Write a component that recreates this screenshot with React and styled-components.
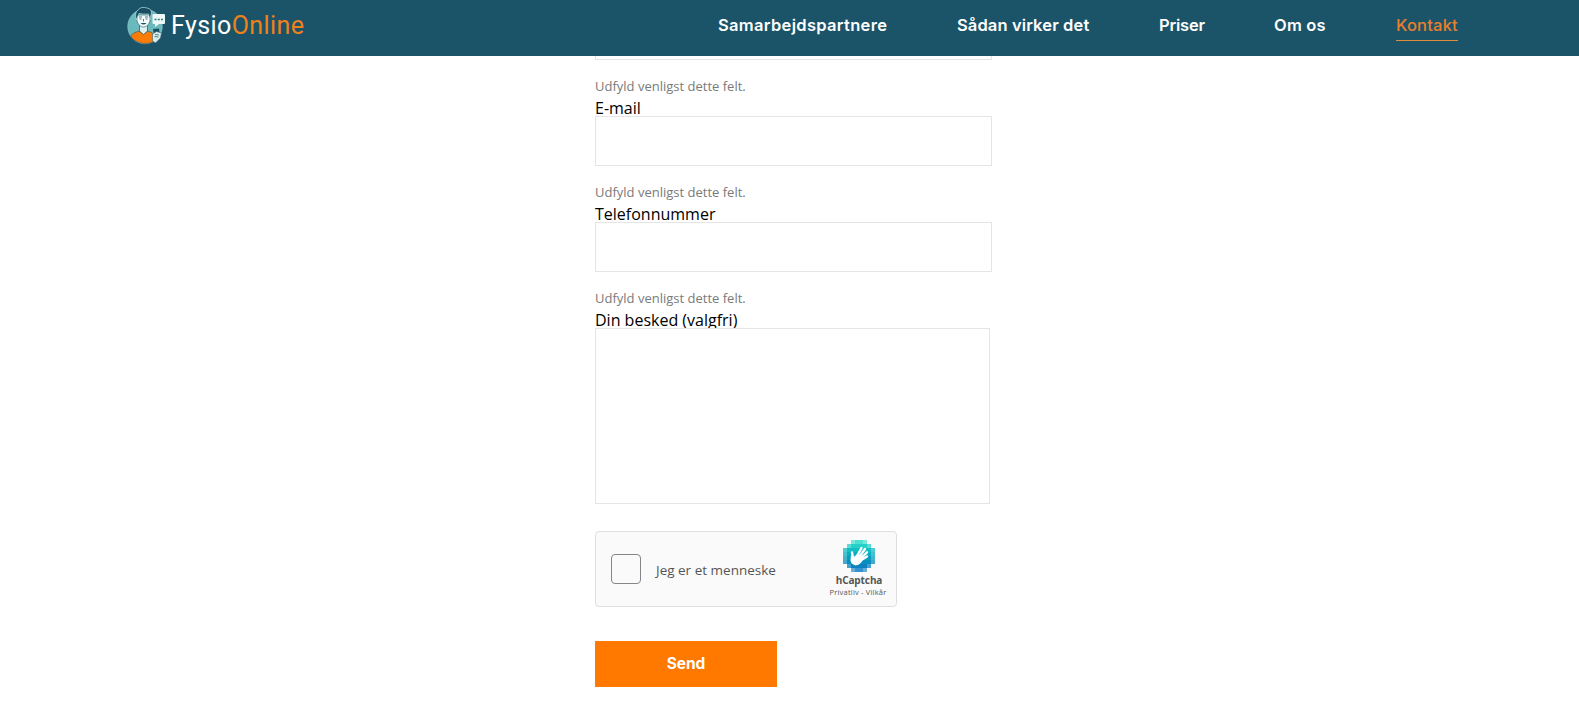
import React from "react";
import styled, { createGlobalStyle } from "styled-components";

const Global = createGlobalStyle`
  * { box-sizing: border-box; }
  html, body { margin: 0; background: #fff; overflow: hidden; }
  body { font-family: "Open Sans", "Noto Sans", sans-serif; color: #000; }
`;

const Page = styled.div`
  height: 708px;
  overflow: hidden;
  display: flex;
  flex-direction: column;
`;

const Header = styled.header`
  flex: none;
  height: 56px;
  background: #1b5468;
  display: flex;
  justify-content: space-between;
  align-items: flex-start;
  padding: 0 121px 0 127px;
`;

const Brand = styled.a`
  display: flex;
  align-items: flex-start;
  gap: 4px;
  padding-top: 6px;
`;

const Wordmark = styled.span`
  font: 400 25px/40px Roboto, sans-serif;
  letter-spacing: 0.42px;
  color: #fff;
  white-space: nowrap;
  span { color: #f0811a; }
`;

const Nav = styled.nav`
  display: flex;
  gap: 70px;
  padding-top: 9px;
`;

const NavLink = styled.a`
  width: ${(p) => p.$width}px;
  height: 32px;
  font: ${(p) => (p.$active ? 500 : 600)} 16.5px/33px Inter, sans-serif;
  letter-spacing: ${(p) => p.$track || 0}px;
  white-space: nowrap;
  color: ${(p) => (p.$active ? "#e87f2d" : "#fff")};
  border-bottom: 1px solid ${(p) => (p.$active ? "#e08c3c" : "transparent")};
`;

const Form = styled.form`
  width: 397px;
  margin-left: 595px;
  display: flex;
  flex-direction: column;
  align-items: flex-start;
`;

const ClippedField = styled.div`
  width: 397px;
  height: 4px;
  border: 1px solid #e5e5e5;
  border-top: 0;
`;

const Hint = styled.span`
  margin-top: 16px;
  height: 20px;
  font-size: 13px;
  line-height: 20px;
  color: #7a7a7a;
`;

const Label = styled.label`
  height: 20px;
  font-size: 16px;
  line-height: 24px;
`;

const Input = styled.input`
  position: relative;
  width: 397px;
  height: 50px;
  border: 1px solid #e5e5e5;
  background: #fff;
  outline: 0;
`;

const TextArea = styled.textarea`
  position: relative;
  display: block;
  width: 395px;
  height: 176px;
  border: 1px solid #e5e5e5;
  background: #fff;
  resize: none;
`;

const Captcha = styled.div`
  width: 302px;
  height: 76px;
  margin-top: 27px;
  border: 1px solid #dedede;
  border-radius: 4px;
  background: #fafafa;
  display: flex;
  align-items: center;
  padding-left: 15px;
`;

const Check = styled.span`
  width: 30px;
  height: 30px;
  border: 1px solid #858585;
  border-radius: 4px;
`;

const CaptchaText = styled.span`
  flex: 1;
  margin-left: 15px;
  padding-top: 2px;
  font: 13.5px/20px "Open Sans", sans-serif;
  letter-spacing: 0;
  color: #555;
  white-space: nowrap;
`;

const CaptchaBrand = styled.div`
  align-self: flex-start;
  width: 74px;
  padding-top: 8px;
  display: flex;
  flex-direction: column;
  align-items: center;
  color: #555;
  b { font: 700 10px/14px "Open Sans", sans-serif; letter-spacing: -0.1px; margin-top: 1px; }
  small { font: 7.5px/10px "Open Sans", sans-serif; letter-spacing: 0.2px; white-space: nowrap; margin-right: 2px; }
`;

const Send = styled.button`
  width: 182px;
  height: 46px;
  margin-top: 34px;
  border: 0;
  background: #ff7800;
  color: #fff;
  font: 700 15.5px/46px Inter, sans-serif;
  letter-spacing: -0.1px;
  padding: 0;
`;

const Avatar = () => (
  <svg width="40" height="40" viewBox="0 0 40 40">
    <circle cx="18" cy="20.500" r="17.300" fill="#69b9bd" stroke="#a9d6d8" strokeWidth=".5" />
    <path d="M12.500 16h8v9l-4 4-4-4z" fill="#dff0ef" stroke="#1b5468" strokeWidth=".7" />
    <path d="M3.500 30Q5 27 12 25L16.500 28.500L21 25Q26 26 27.500 30L28.500 34.500Q18 41 7 34Z" fill="#f97c08" stroke="#184e60" strokeWidth=".5" />
    <path d="M10 9h13v6Q21 21 16.500 21Q12 21 10 15Z" fill="#f4fbfa" stroke="#1b5468" strokeWidth=".6" />
    <path d="M9.500 14Q7 7 11 4Q14 0 20 2Q26 3 24 9L23 14L21.500 8Q16 8.500 12 7.500Z" fill="#184e60" stroke="#bfe0e0" strokeWidth=".7" />
    <path d="M12 11h3M18 11h3M12.500 13h2M18.500 13h2M16.500 13v2.500" stroke="#27596b" strokeWidth=".8" fill="none" />
    <path d="M13.500 17q3 3 6 0z" fill="#184e60" />
    <path d="M26.500 8h10.500q1 0 1 1v8q0 1-1 1h-5l-4 3v-3h-1.500q-1 0-1-1V9q0-1 1-1Z" fill="#eef8f7" />
    <path d="M27.500 13.500h2M30.800 13.500h2M34 13.500h2" stroke="#2d8088" strokeWidth="1.300" />
    <path d="M26 23l6-.500 1 9-5 2z" fill="#184e60" />
    <path d="M25.500 28l4-2.500 5 1.500-1 5-5 5-3-2z" fill="#d9ecea" stroke="#1b5468" strokeWidth=".5" />
    <path d="M28 28.500l4 .500M27.500 30.500l4 .500" stroke="#1b5468" strokeWidth=".7" />
  </svg>
);

const BANDS = [
  ["#4de1d2", "..1221.."],
  ["#25d0c8", ".122221."],
  ["#10bec3", "12222221"],
  ["#08adc0", "12222221"],
  ["#089dbc", "12222221"],
  ["#078fbd", "12222221"],
  ["#0b82bd", ".122221."],
  ["#3592ce", "..1221.."],
];

const CaptchaLogo = () => (
  <svg width="32" height="32" viewBox="0 0 32 32">
    <g shapeRendering="crispEdges">
      {BANDS.map(([fill, cells], y) =>
        [...cells].map((c, x) =>
          c === "." ? null : (
            <rect key={`${x}-${y}`} x={x * 4} y={y * 4} width="4" height="4" fill={fill} opacity={c === "1" ? 0.75 : 1} />
          )
        )
      )}
    </g>
    <path
      d="M13.500 17L18.500 8M15.500 18L22 9M17 19L24 12.300M17.500 20.500L24 16.500M10 18L9 12.500"
      stroke="#fff"
      strokeWidth="2.400"
      strokeLinecap="round"
    />
    <path fill="#fff" d="M8 15L11.500 16.500L14.500 14L20 19Q17.500 25.500 12.500 25.500Q7.500 24 7.500 20Z" />
  </svg>
);

const LINKS = [
  { text: "Samarbejdspartnere", width: 169, track: 0.32 },
  { text: "Sådan virker det", width: 132, track: 0.12 },
  { text: "Priser", width: 45, track: -0.2 },
  { text: "Om os", width: 52, track: 0.2 },
  { text: "Kontakt", width: 62, track: 0.2, active: true },
];

const REQUIRED = "Udfyld venligst dette felt.";

export default function App() {
  return (
    <Page>
      <Global />
      <Header>
        <Brand>
          <Avatar />
          <Wordmark>Fysio<span>Online</span></Wordmark>
        </Brand>
        <Nav>
          {LINKS.map((l) => (
            <NavLink key={l.text} $width={l.width} $track={l.track} $active={l.active}>{l.text}</NavLink>
          ))}
        </Nav>
      </Header>
      <Form>
        <ClippedField />
        <Hint>{REQUIRED}</Hint>
        <Label>E-mail</Label>
        <Input type="email" />
        <Hint>{REQUIRED}</Hint>
        <Label>Telefonnummer</Label>
        <Input type="tel" />
        <Hint>{REQUIRED}</Hint>
        <Label>Din besked (valgfri)</Label>
        <TextArea />
        <Captcha>
          <Check />
          <CaptchaText>Jeg er et menneske</CaptchaText>
          <CaptchaBrand>
            <CaptchaLogo />
            <b>hCaptcha</b>
            <small>Privatliv - Vilkår</small>
          </CaptchaBrand>
        </Captcha>
        <Send type="button">Send</Send>
      </Form>
    </Page>
  );
}
